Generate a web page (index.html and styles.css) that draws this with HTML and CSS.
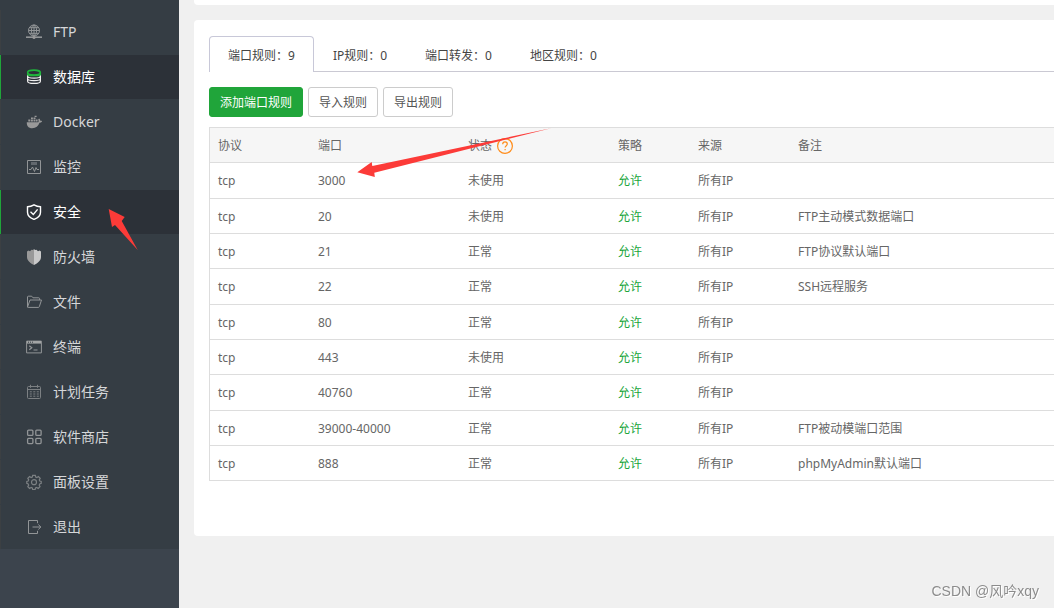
FILE: index.html
```html
<!DOCTYPE html>
<html lang="zh-CN">
<head>
<meta charset="utf-8">
<meta name="viewport" content="width=device-width, initial-scale=1">
<title>安全</title>
<link rel="stylesheet" href="styles.css">
</head>
<body>
<div class="layout">
  <aside class="sidebar">
    <nav class="menu">
      <a class="menu-item" href="#ftp">
        <svg class="icon" viewBox="0 0 16 16"><g stroke-width="1"><circle cx="8" cy="6.5" r="5.5"/><ellipse cx="8" cy="6.5" rx="2.6" ry="5.5"/><path d="M8 1v13M2.5 6.5h11M3.5 3.7h9M3.5 9.3h9"/></g><path stroke-width="1.6" d="M0 13.2h16"/><circle class="solid" cx="8" cy="13.5" r="1.5"/></svg>
        <span>FTP</span></a>
      <a class="menu-item active" href="#database">
        <svg class="icon" viewBox="0 0 16 16"><g stroke="#eee" stroke-width="1.2"><path d="M1.6 5v2c0 1.3 2.8 2.1 6.4 2.1s6.4-.8 6.4-2.1V5M1.6 7v2.6c0 1.3 2.8 2.1 6.4 2.1s6.4-.8 6.4-2.1V7M1.6 9.5v2.7c0 1.3 2.8 2.2 6.4 2.2s6.4-.9 6.4-2.2V9.5"/></g><ellipse cx="8" cy="3.600" rx="6.300" ry="2.400" stroke="#20b53c" stroke-width="1.700"/><path d="M1.600 4v1.600c0 .6 1.500.9 2.500.9h7.800c1 0 2.500-.3 2.500-.9V4" stroke="#20b53c" stroke-width="1.300"/></svg>
        <span>数据库</span></a>
      <a class="menu-item" href="#docker">
        <svg class="icon" viewBox="0 0 16 16"><path class="solid" d="M.8 8.200h11.400c.6-.9.500-1.900 0-2.700l.9-.9c.8.700 1.200 1.500 1.200 2.200.7-.1 1.400 0 1.900.4-.5 1-1.500 1.500-2.700 1.600-1.200 3.400-3.500 5.400-7.300 5.400C2.500 14.200.6 12 .8 8.200zM2.300 5.600h2v2h-2zM4.900 5.600h2v2h-2zM7.500 5.600h2v2h-2zM10 5.600h1.600v2H10zM5 3.600h1.900v1.300H5zM7.500 3.600h2v1.300h-2zM8.600 1.800h2V3h-2z"/></svg>
        <span>Docker</span></a>
      <a class="menu-item" href="#monitor">
        <svg class="icon" viewBox="0 0 16 16"><path d="M1.500 1.500h13v13h-13zM3 10.500h2l1.500-2.500 2 4.500 1.500-4 1 2h2"/><path class="solid faint" d="M5 3h6v3H5z"/></svg>
        <span>监控</span></a>
      <a class="menu-item active" href="#security" aria-current="page">
        <svg class="icon" viewBox="0 0 16 16"><g stroke="#fff" stroke-width="1.400"><path d="M8 .8c2 1.200 4.200 1.900 6.500 2v5.400c0 3.200-2.600 5.700-6.500 7.200-3.900-1.500-6.500-4-6.500-7.200V2.800c2.300-.1 4.500-.8 6.500-2z"/><path d="M4.500 7.800l2.800 2.600 4.300-5"/></g></svg>
        <span>安全</span></a>
      <a class="menu-item" href="#firewall">
        <svg class="icon" viewBox="0 0 16 16"><path fill="#999" stroke="none" d="M8 0v16C4 14 1 11.500 1 8V2.500l1.500-1 1.500.8 1.500-1.600L7 1z"/><path fill="#c9c9c9" stroke="none" d="M8 0v16c4-2 7-4.500 7-8V2.500l-1.500-1-1.500.8L10.500.7 9 1z"/></svg>
        <span>防火墙</span></a>
      <a class="menu-item" href="#files">
        <svg class="icon" viewBox="0 0 16 16"><path d="M1.500 13V3c0-.5.300-.8.800-.8h3.400l1.300 1.600h5.800c.5 0 .8.300.8.800V6M1.500 13.200 4 6h11.500l-2.200 6.700c-.2.500-.4.700-.9.700H2.200c-.4 0-.7 0-.7-.4"/></svg>
        <span>文件</span></a>
      <a class="menu-item" href="#terminal">
        <svg class="icon" viewBox="0 0 16 16"><path d="M.6 2.100h14.800v11.800H.6z"/><path d="M3.300 6.700l2.500 2-2.500 2M7.500 11h4" stroke-width="1.200"/><path d="M1 3.300h14" stroke="#a2a4a5" stroke-width="2.600"/><path d="M2 3.200h1M4 3.200h1M6 3.200h1" stroke="#353d44"/></svg>
        <span>终端</span></a>
      <a class="menu-item" href="#cron">
        <svg class="icon dim" viewBox="0 0 16 16"><rect x="1.500" y="2.500" width="13" height="12" rx="1"/><path d="M1.500 5.500h13M4.500.8v3M11.500.8v3"/><path stroke-dasharray="2 1.500" d="M3.800 7.800h9M3.800 10h9M3.800 12.200h9"/></svg>
        <span>计划任务</span></a>
      <a class="menu-item" href="#store">
        <svg class="icon" viewBox="0 0 16 16"><g stroke-width="1.300"><rect x="1.600" y="1.100" width="5.300" height="5.300" rx="1"/><rect x="9.800" y="1.100" width="5.300" height="5.300" rx="1"/><rect x="1.600" y="9.300" width="5.300" height="5.300" rx="1"/><rect x="9.800" y="9.300" width="5.300" height="5.300" rx="1"/></g></svg>
        <span>软件商店</span></a>
      <a class="menu-item" href="#settings">
        <svg class="icon dim" viewBox="0 0 16 16"><g stroke-width="1.200"><path d="M6.700 1.300h2.600l.4 1.700 1.200.5 1.500-.9 1.800 1.800-.9 1.500.5 1.100 1.400.4v2l-1.500.5-.5 1.200.8 1.500-1.800 1.800-1.500-.9-1.200.5-.4 1.500H6.700L6.300 14l-1.200-.5-1.500.9-1.800-1.800.9-1.500-.5-1.200-1.400-.5v-2L2.200 7l.5-1.100-.9-1.500 1.800-1.800 1.500.9L6.300 3z"/><circle cx="8" cy="8.200" r="2.500"/></g></svg>
        <span>面板设置</span></a>
      <a class="menu-item" href="#logout">
        <svg class="icon" viewBox="0 0 16 16"><path d="M11.500 4.200V1.500h-9v13h9v-2.700M6.500 8h8.300M12.300 5.500 14.900 8l-2.600 2.500"/></svg>
        <span>退出</span></a>
    </nav>
  </aside>

  <main class="main">
    <section class="card card-top"></section>
    <section class="card rules">
      <div class="tabs" role="tablist">
        <button class="tab selected" type="button" role="tab" aria-selected="true">端口规则：9</button>
        <button class="tab" type="button" role="tab" aria-selected="false">IP规则：0</button>
        <button class="tab" type="button" role="tab" aria-selected="false">端口转发：0</button>
        <button class="tab" type="button" role="tab" aria-selected="false">地区规则：0</button>
      </div>
      <div class="toolbar">
        <button class="btn primary" type="button">添加端口规则</button>
        <button class="btn" type="button">导入规则</button>
        <button class="btn" type="button">导出规则</button>
      </div>
      <table class="table">
        <colgroup><col class="w-100"><col class="w-150"><col class="w-150"><col class="w-80"><col class="w-100"><col></colgroup>
        <thead>
          <tr><th>协议</th><th>端口</th><th><span class="with-help">状态<a class="help" href="#help" aria-label="帮助"><svg viewBox="0 0 16 16"><circle cx="8" cy="8" r="7.400"/><path d="M5.700 6.200c0-1.400 1-2.300 2.300-2.300s2.300.9 2.300 2.100c0 1.700-2.200 1.700-2.200 3.600M8.100 11v1.300"/></svg></a></span></th><th>策略</th><th>来源</th><th>备注</th></tr>
        </thead>
        <tbody>
          <tr><td>tcp</td><td>3000</td><td>未使用</td><td><a class="allow" href="#rule">允许</a></td><td>所有IP</td><td></td></tr>
          <tr><td>tcp</td><td>20</td><td>未使用</td><td><a class="allow" href="#rule">允许</a></td><td>所有IP</td><td>FTP主动模式数据端口</td></tr>
          <tr><td>tcp</td><td>21</td><td>正常</td><td><a class="allow" href="#rule">允许</a></td><td>所有IP</td><td>FTP协议默认端口</td></tr>
          <tr><td>tcp</td><td>22</td><td>正常</td><td><a class="allow" href="#rule">允许</a></td><td>所有IP</td><td>SSH远程服务</td></tr>
          <tr><td>tcp</td><td>80</td><td>正常</td><td><a class="allow" href="#rule">允许</a></td><td>所有IP</td><td></td></tr>
          <tr><td>tcp</td><td>443</td><td>未使用</td><td><a class="allow" href="#rule">允许</a></td><td>所有IP</td><td></td></tr>
          <tr><td>tcp</td><td>40760</td><td>正常</td><td><a class="allow" href="#rule">允许</a></td><td>所有IP</td><td></td></tr>
          <tr><td>tcp</td><td>39000-40000</td><td>正常</td><td><a class="allow" href="#rule">允许</a></td><td>所有IP</td><td>FTP被动模端口范围</td></tr>
          <tr><td>tcp</td><td>888</td><td>正常</td><td><a class="allow" href="#rule">允许</a></td><td>所有IP</td><td>phpMyAdmin默认端口</td></tr>
        </tbody>
      </table>
    </section>
  </main>
</div>
<svg class="arrows" width="560" height="260" viewBox="0 0 560 260" aria-hidden="true">
  <path d="M357.300 172.300 371.700 162l.6 3.900L551 128.300 374.300 172.700l.5 4.300z"/>
  <path d="M108.700 209l16 8-3 4 16 29L115 225l-3 2z"/>
</svg>
<div class="watermark">CSDN @风吟xqy</div>
</body>
</html>
```

FILE: styles.css
```css
* {
  box-sizing: border-box;
}

body {
  margin: 0;
  background: #f0f0f0;
  color: #666;
  font: 12px/18px "Noto Sans", "Noto Sans CJK SC", sans-serif;
}

a {
  color: inherit;
  text-decoration: none;
}

button {
  font: inherit;
  cursor: pointer;
}

.layout {
  display: flex;
  min-height: 100vh;
}

/* Sidebar */
.sidebar {
  flex: 0 0 179px;
  background: #3c444d;
}

.menu {
  display: flex;
  flex-direction: column;
  gap: 1px;
  padding-top: 10px;
  background: #353d44;
}

.menu-item {
  display: flex;
  align-items: center;
  gap: 11px;
  height: 44px;
  padding-left: 25px;
  border-left: 1px solid #3c4043;
  color: #d6d7d9;
  font-size: 14px;
  line-height: 20px;
}

.menu-item.active {
  border-left-color: #20a53a;
  background: #2c3138;
  color: #fff;
}

.icon {
  flex: none;
  width: 16px;
  height: 16px;
  fill: none;
  stroke: #929597;
}

.icon.dim {
  stroke: #7c8083;
}

.icon .solid {
  fill: #999;
  stroke: none;
}

.icon .faint {
  fill: #62686e;
}

/* Content */
.main {
  flex: 1;
  min-width: 0;
  padding-left: 15px;
}

.card {
  border-radius: 4px 0 0 4px;
  background: #fff;
}

.card-top {
  height: 5px;
  margin-bottom: 15px;
  border-radius: 0 0 0 4px;
}

.rules {
  padding: 16px 0 55px 15px;
}

.tabs {
  display: flex;
  height: 36px;
  border-bottom: 1px solid #cac9d3;
}

.tab {
  height: 36px;
  padding: 2px 18px 0;
  border: 1px solid transparent;
  border-bottom: 0;
  border-radius: 4px 4px 0 0;
  background: none;
  color: #444;
}

.tab.selected {
  border-color: #c8c8d8;
  background: #fff;
}

.toolbar {
  display: flex;
  gap: 5px;
  padding: 15px 0 10px;
}

.btn {
  height: 30px;
  padding: 2px 10px 0;
  border: 1px solid #ccc;
  border-radius: 3px;
  background: #fff;
  color: #555;
}

.btn.primary {
  border-color: #20a53a;
  background: #20a53a;
  color: #fff;
}

.table {
  width: 100%;
  border: 1px solid #ddd;
  border-right: 0;
  border-spacing: 0;
  border-bottom: 0;
  table-layout: fixed;
}

.table th,
.table td {
  height: 35px;
  padding: 1px 8px 0;
  border-bottom: 1px solid #ddd;
  font-weight: 400;
  text-align: left;
}

.table th {
  background: #f6f6f6;
}

.table tbody tr:nth-child(3n+1) td {
  height: 36px;
}

.w-80 {
  width: 80px;
}

.w-100 {
  width: 100px;
}

.w-150 {
  width: 150px;
}

.with-help {
  display: flex;
  align-items: center;
  gap: 5px;
}

.help {
  display: flex;
}

.help svg {
  width: 16px;
  height: 16px;
  fill: none;
  stroke: #ff8c1a;
  stroke-width: 1.2;
}

.allow {
  color: #20a53a;
}

/* Overlays */
.arrows {
  position: absolute;
  top: 0;
  left: 0;
  fill: #fc3b38;
  pointer-events: none;
}

.watermark {
  position: fixed;
  right: 15px;
  bottom: 7px;
  color: #8c8c8c;
  font: 14px/20px "Liberation Sans", "Noto Sans CJK SC", sans-serif;
  text-shadow: 1px 1px 0 #fff;
}
```
